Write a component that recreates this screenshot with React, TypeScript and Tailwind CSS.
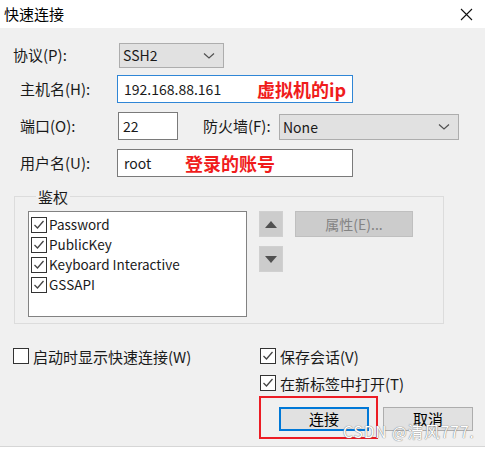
import React from "react";

const font = { fontFamily: '"Noto Sans CJK SC", "Noto Sans", sans-serif' };

function Chevron() {
  return (
    <svg width="12" height="8" viewBox="0 0 12 8" className="shrink-0">
      <path d="M1 1.5 L6 6 L11 1.5" fill="none" stroke="#505050" strokeWidth="1.2" />
    </svg>
  );
}

function Check({ checked }: { checked: boolean }) {
  return (
    <svg width="16" height="16" viewBox="0 0 16 16" className="shrink-0">
      <rect x="0.5" y="0.5" width="15" height="15" fill="#ffffff" stroke="#333333" />
      {checked ? (
        <path d="M3.5 8 L6.5 11 L12.5 4" fill="none" stroke="#444444" strokeWidth="1.3" />
      ) : null}
    </svg>
  );
}

function Select({ value, className }: { value: string; className: string }) {
  return (
    <div
      className={`flex items-center justify-between border border-[#adadad] bg-[#e1e1e1] pl-[3px] pr-[8px] text-[14px] text-[#1a1a1a] ${className}`}
    >
      <span>{value}</span>
      <Chevron />
    </div>
  );
}

function Label({ children, className }: { children: React.ReactNode; className: string }) {
  return <span className={`shrink-0 text-[15px] text-[#1a1a1a] ${className}`}>{children}</span>;
}

export default function App() {
  const methods = ["Password", "PublicKey", "Keyboard Interactive", "GSSAPI"];

  return (
    <div className="h-[451px] w-[485px] overflow-hidden bg-white" style={font}>
      {/* title bar */}
      <div className="flex h-[28px] items-center justify-between bg-white pl-[4px] pr-[12px]">
        <span className="text-[15px] text-black">快速连接</span>
        <svg width="13" height="13" viewBox="0 0 13 13">
          <path d="M1 1 L12 12 M12 1 L1 12" stroke="#111" strokeWidth="1.1" />
        </svg>
      </div>

      <div className="h-[419px] border-b border-[#d6d6d6] bg-[#f0f0f0] pt-[15px]">
        {/* protocol */}
        <div className="flex h-[25px] items-center pl-[13px]">
          <Label className="w-[106px]">协议(P):</Label>
          <Select value="SSH2" className="h-[25px] w-[105px]" />
        </div>

        {/* host */}
        <div className="mt-[7px] flex h-[28px] items-center pl-[20px]">
          <Label className="w-[97px]">主机名(H):</Label>
          <div className="flex h-[28px] w-[236px] items-center border border-[#2f86d6] bg-white pl-[6px]">
            <span className="w-[133px] text-[14px] text-[#1a1a1a]">192.168.88.161</span>
            <span className="text-[18px] font-bold text-[#f01c1c]">虚拟机的ip</span>
          </div>
        </div>

        {/* port / firewall */}
        <div className="mt-[9px] flex h-[28px] items-center pl-[20px]">
          <Label className="w-[98px]">端口(O):</Label>
          <div className="flex h-[28px] w-[60px] items-center border border-[#7a7a7a] bg-white pl-[4px] text-[14px] text-[#1a1a1a]">
            22
          </div>
          <Label className="ml-[25px] w-[76px]">防火墙(F):</Label>
          <Select value="None" className="mt-[2px] h-[26px] w-[180px]" />
        </div>

        {/* username */}
        <div className="mt-[9px] flex h-[28px] items-center pl-[20px]">
          <Label className="w-[97px]">用户名(U):</Label>
          <div className="flex h-[28px] w-[236px] items-center border border-[#7a7a7a] bg-white pl-[6px]">
            <span className="w-[61px] text-[14px] text-[#1a1a1a]">root</span>
            <span className="text-[18px] font-bold text-[#f01c1c]">登录的账号</span>
          </div>
        </div>

        {/* auth group */}
        <fieldset className="ml-[14px] mt-[12px] h-[135px] w-[430px] border border-[#dcdcdc] pl-[13px]">
          <legend className="ml-[8px] px-[2px] text-[15px] leading-[15px] text-[#1a1a1a]">鉴权</legend>
          <div className="mt-[7px] flex items-start">
            <div className="h-[106px] w-[219px] border border-[#828282] bg-white pl-[2px] pt-[3px]">
              {methods.map((m) => (
                <div key={m} className="flex h-[20px] items-center gap-[2px]">
                  <Check checked />
                  <span className="text-[13.5px] leading-none text-[#1a1a1a]">{m}</span>
                </div>
              ))}
            </div>
            <div className="ml-[12px] flex flex-col gap-[9px]">
              <div className="flex h-[26px] w-[24px] items-center justify-center border border-[#d0d0d0] bg-[#cccccc]">
                <svg width="12" height="7" viewBox="0 0 12 7">
                  <path d="M0 7 L6 0 L12 7 Z" fill="#505050" />
                </svg>
              </div>
              <div className="flex h-[26px] w-[24px] items-center justify-center border border-[#d0d0d0] bg-[#cccccc]">
                <svg width="12" height="7" viewBox="0 0 12 7">
                  <path d="M0 0 L6 7 L12 0 Z" fill="#505050" />
                </svg>
              </div>
            </div>
            <div className="ml-[12px] flex h-[26px] w-[118px] items-center justify-center border border-[#bfbfbf] bg-[#cccccc] text-[14px] text-[#838383]">
              属性(E)...
            </div>
          </div>
        </fieldset>

        {/* options */}
        <div className="mt-[24px] flex">
          <div className="flex w-[260px] items-center gap-[4px] self-start pl-[13px]">
            <Check checked={false} />
            <span className="text-[15px] leading-none text-[#1a1a1a]">启动时显示快速连接(W)</span>
          </div>
          <div className="flex flex-col gap-[11px]">
            <div className="flex items-center gap-[4px]">
              <Check checked />
              <span className="text-[15px] leading-none text-[#1a1a1a]">保存会话(V)</span>
            </div>
            <div className="flex items-center gap-[4px]">
              <Check checked />
              <span className="text-[15px] leading-none text-[#1a1a1a]">在新标签中打开(T)</span>
            </div>
          </div>
        </div>

        {/* buttons */}
        <div className="relative mt-[16px] flex pl-[279px]">
          <div className="relative flex h-[24px] w-[90px] items-center justify-center border-2 border-[#0078d7] bg-[#e1e1e1] text-[15px] text-black">
            连接
            <div className="absolute bottom-[-10px] left-[-22px] right-[-11px] top-[-13px] border-2 border-[#ec1c24]" />
          </div>
          <div className="ml-[14px] flex h-[24px] w-[90px] items-center justify-center border border-[#adadad] bg-[#e1e1e1] text-[15px] text-black">
            取消
          </div>
          {/* watermark */}
          <span className="absolute left-[343px] top-[17px] text-[15.5px] leading-none tracking-[1px] text-white [text-shadow:0_0_1px_#7a7a7a,0_0_1px_#7a7a7a]">
            CSDN @清风777.
          </span>
        </div>
      </div>
    </div>
  );
}
